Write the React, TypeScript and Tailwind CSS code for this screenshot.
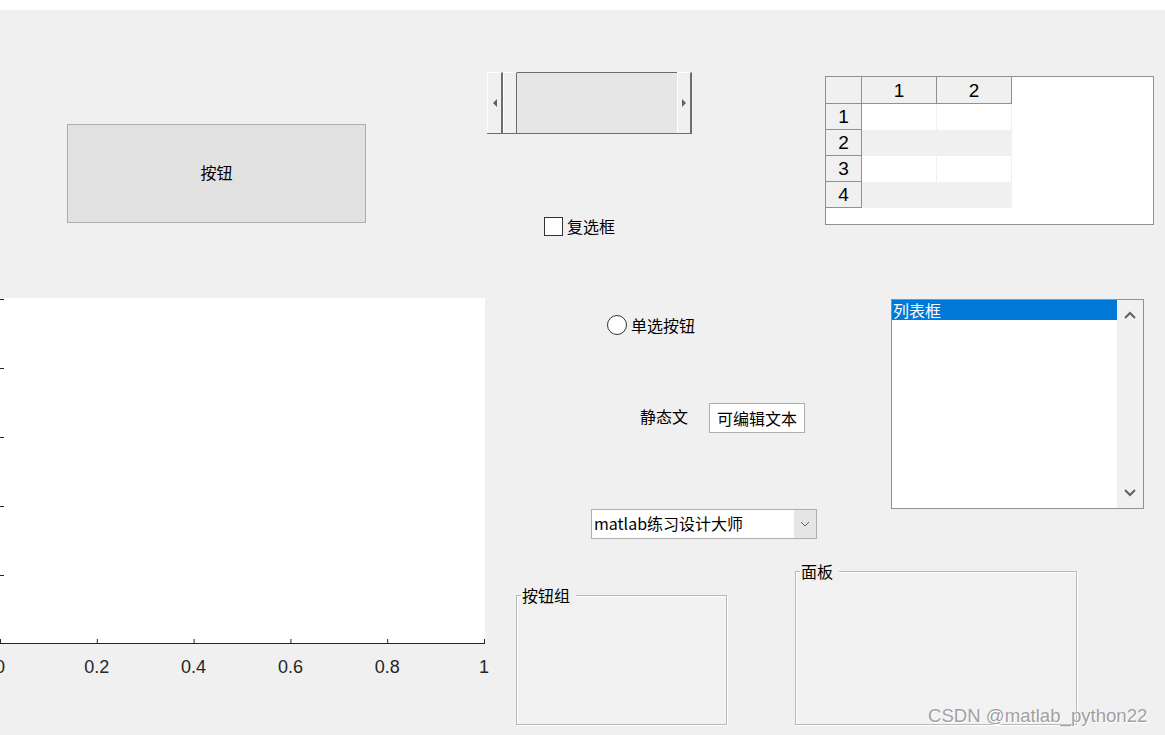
import React from "react";

const CJK = { fontFamily: '"Noto Sans CJK SC", "Noto Sans", sans-serif' };
const SANS = { fontFamily: '"Liberation Sans", Arial, sans-serif' };

function Axes() {
  const xs = [0, 96.8, 193.6, 290.4, 387.2, 484];
  const labels = ["0", "0.2", "0.4", "0.6", "0.8", "1"];
  const ys = [299, 368, 437, 506, 575];
  return (
    <svg className="absolute left-0 top-[290px]" width="500" height="400" viewBox="0 290 500 400">
      <rect x="0" y="298" width="485" height="345" fill="#ffffff" />
      <line x1="0" y1="643.5" x2="485" y2="643.5" stroke="#262626" strokeWidth="1" />
      {xs.map((x, i) => (
        <g key={i}>
          <line x1={x + 0.5} y1="639" x2={x + 0.5} y2="643" stroke="#262626" strokeWidth="1" />
          <text x={x} y="673" textAnchor="middle" fontSize="18" fill="#262626" style={SANS}>
            {labels[i]}
          </text>
        </g>
      ))}
      {ys.map((y) => (
        <line key={y} x1="0" y1={y + 0.5} x2="4" y2={y + 0.5} stroke="#262626" strokeWidth="1" />
      ))}
    </svg>
  );
}

function Slider() {
  return (
    <div className="absolute left-[487px] top-[72px] flex h-[62px] w-[205px] border-b border-[#6d6d6d]">
      <div className="flex w-[16px] items-center justify-center border-t border-l border-white border-r-2 border-r-[#6d6d6d] bg-[#f0f0f0]">
        <svg width="4" height="8" viewBox="0 0 4 8"><path d="M4 0 L0 4 L4 8 Z" fill="#606060" /></svg>
      </div>
      <div className="w-[14px] border-t border-l border-white border-r border-r-[#6d6d6d] bg-[#f0f0f0]" />
      <div className="flex-1 border-t border-[#6d6d6d] bg-[#e6e6e6]" />
      <div className="flex w-[15px] items-center justify-center border-t border-l border-white border-r-2 border-r-[#6d6d6d] bg-[#f0f0f0]">
        <svg width="4" height="8" viewBox="0 0 4 8"><path d="M0 0 L4 4 L0 8 Z" fill="#606060" /></svg>
      </div>
    </div>
  );
}

function Table() {
  const rows = [1, 2, 3, 4];
  return (
    <div className="absolute left-[825px] top-[76px] h-[149px] w-[329px] border border-[#8f8f94] bg-white" style={SANS}>
      <div className="grid grid-cols-[36px_75px_75px] grid-rows-[27px_26px_26px_26px_26px] text-[19px] leading-none text-black">
        <div className="border-r border-b border-[#8f8f94] bg-[#f0f0f0]" />
        <div className="flex items-center justify-center border-r border-b border-[#8f8f94] bg-[#f0f0f0]">1</div>
        <div className="flex items-center justify-center border-r border-b border-[#8f8f94] bg-[#f0f0f0]">2</div>
        {rows.map((r) => (
          <React.Fragment key={r}>
            <div className="flex items-center justify-center border-r border-b border-[#8f8f94] bg-[#f0f0f0]">{r}</div>
            <div className={r % 2 === 1 ? "border-r border-[#f0f0f0] bg-white" : "bg-[#f0f0f0]"} />
            <div className={r % 2 === 1 ? "border-r border-[#f0f0f0] bg-white" : "bg-[#f0f0f0]"} />
          </React.Fragment>
        ))}
      </div>
    </div>
  );
}

function ListBox() {
  return (
    <div className="absolute left-[891px] top-[299px] flex h-[210px] w-[253px] border border-[#8f8f94] bg-white" style={CJK}>
      <div className="flex-1">
        <div className="h-[20px] bg-[#0078d7] pl-px text-[16px] leading-[20px] text-white">列表框</div>
      </div>
      <div className="flex w-[26px] flex-col items-center justify-between bg-[#f0f0f0] py-[11px]">
        <svg width="12" height="8" viewBox="0 0 12 8"><path d="M1 7 L6 2 L11 7" fill="none" stroke="#606060" strokeWidth="2" /></svg>
        <svg width="12" height="8" viewBox="0 0 12 8"><path d="M1 1 L6 6 L11 1" fill="none" stroke="#606060" strokeWidth="2" /></svg>
      </div>
    </div>
  );
}

function Frame({ title, className }: { title: string; className: string }) {
  return (
    <div className={"absolute border border-[#b9b9b9] bg-[#f2f2f2] shadow-[inset_1px_1px_0_#ffffff,1px_1px_0_#ffffff] " + className}>
      <span className="absolute left-[4px] top-[-12px] bg-[#f0f0f0] pl-px pr-[6px] text-[16px] leading-[22px] text-black" style={CJK}>
        {title}
      </span>
    </div>
  );
}

export default function App() {
  return (
    <div className="relative h-[735px] w-[1165px] overflow-hidden bg-[#f0f0f0] text-black" style={CJK}>
      <div className="h-[10px] bg-white" />

      {/* push button */}
      <div className="absolute left-[67px] top-[124px] flex h-[99px] w-[299px] items-center justify-center border border-[#adadad] bg-[#e1e1e1] pb-[3px] text-[16px]">
        按钮
      </div>

      <Slider />

      {/* checkbox */}
      <div className="absolute left-[544px] top-[216px] flex items-center gap-[4px] text-[16px] leading-[20px]">
        <div className="h-[19px] w-[19px] border border-[#333333] bg-white" />
        <span>复选框</span>
      </div>

      <Table />

      <Axes />

      {/* radio button */}
      <div className="absolute left-[607px] top-[315px] flex items-center gap-[4px] text-[16px] leading-[20px]">
        <div className="h-[20px] w-[20px] rounded-full border border-[#333333] bg-white" />
        <span>单选按钮</span>
      </div>

      {/* static text + edit */}
      <div className="absolute left-[640px] top-[404px] text-[16px] leading-[24px]">静态文</div>
      <div className="absolute left-[709px] top-[403px] flex h-[30px] w-[96px] items-center justify-center border border-[#adadad] bg-white pb-px text-[16px]">
        可编辑文本
      </div>

      {/* popup menu */}
      <div className="absolute left-[591px] top-[509px] flex h-[30px] w-[226px] border border-[#adadad] bg-white text-[16px]">
        <div className="flex-1 pl-[2px] leading-[27px]">matlab练习设计大师</div>
        <div className="flex w-[22px] items-center justify-center bg-[#e5e5e5]">
          <svg width="10" height="6" viewBox="0 0 10 6"><path d="M1 1 L5 5 L9 1" fill="none" stroke="#606060" strokeWidth="1" /></svg>
        </div>
      </div>

      <ListBox />

      <Frame title="按钮组" className="left-[516px] top-[595px] h-[130px] w-[211px]" />
      <Frame title="面板" className="left-[795px] top-[571px] h-[154px] w-[282px]" />

      <div
        className="absolute left-[928px] top-[704px] text-[18.6px] leading-[24px] text-[#a0a0a0] [text-shadow:0_0_1px_#ffffff,1px_1px_0_#ffffff]"
        style={SANS}
      >
        CSDN @matlab_python22
      </div>
    </div>
  );
}
